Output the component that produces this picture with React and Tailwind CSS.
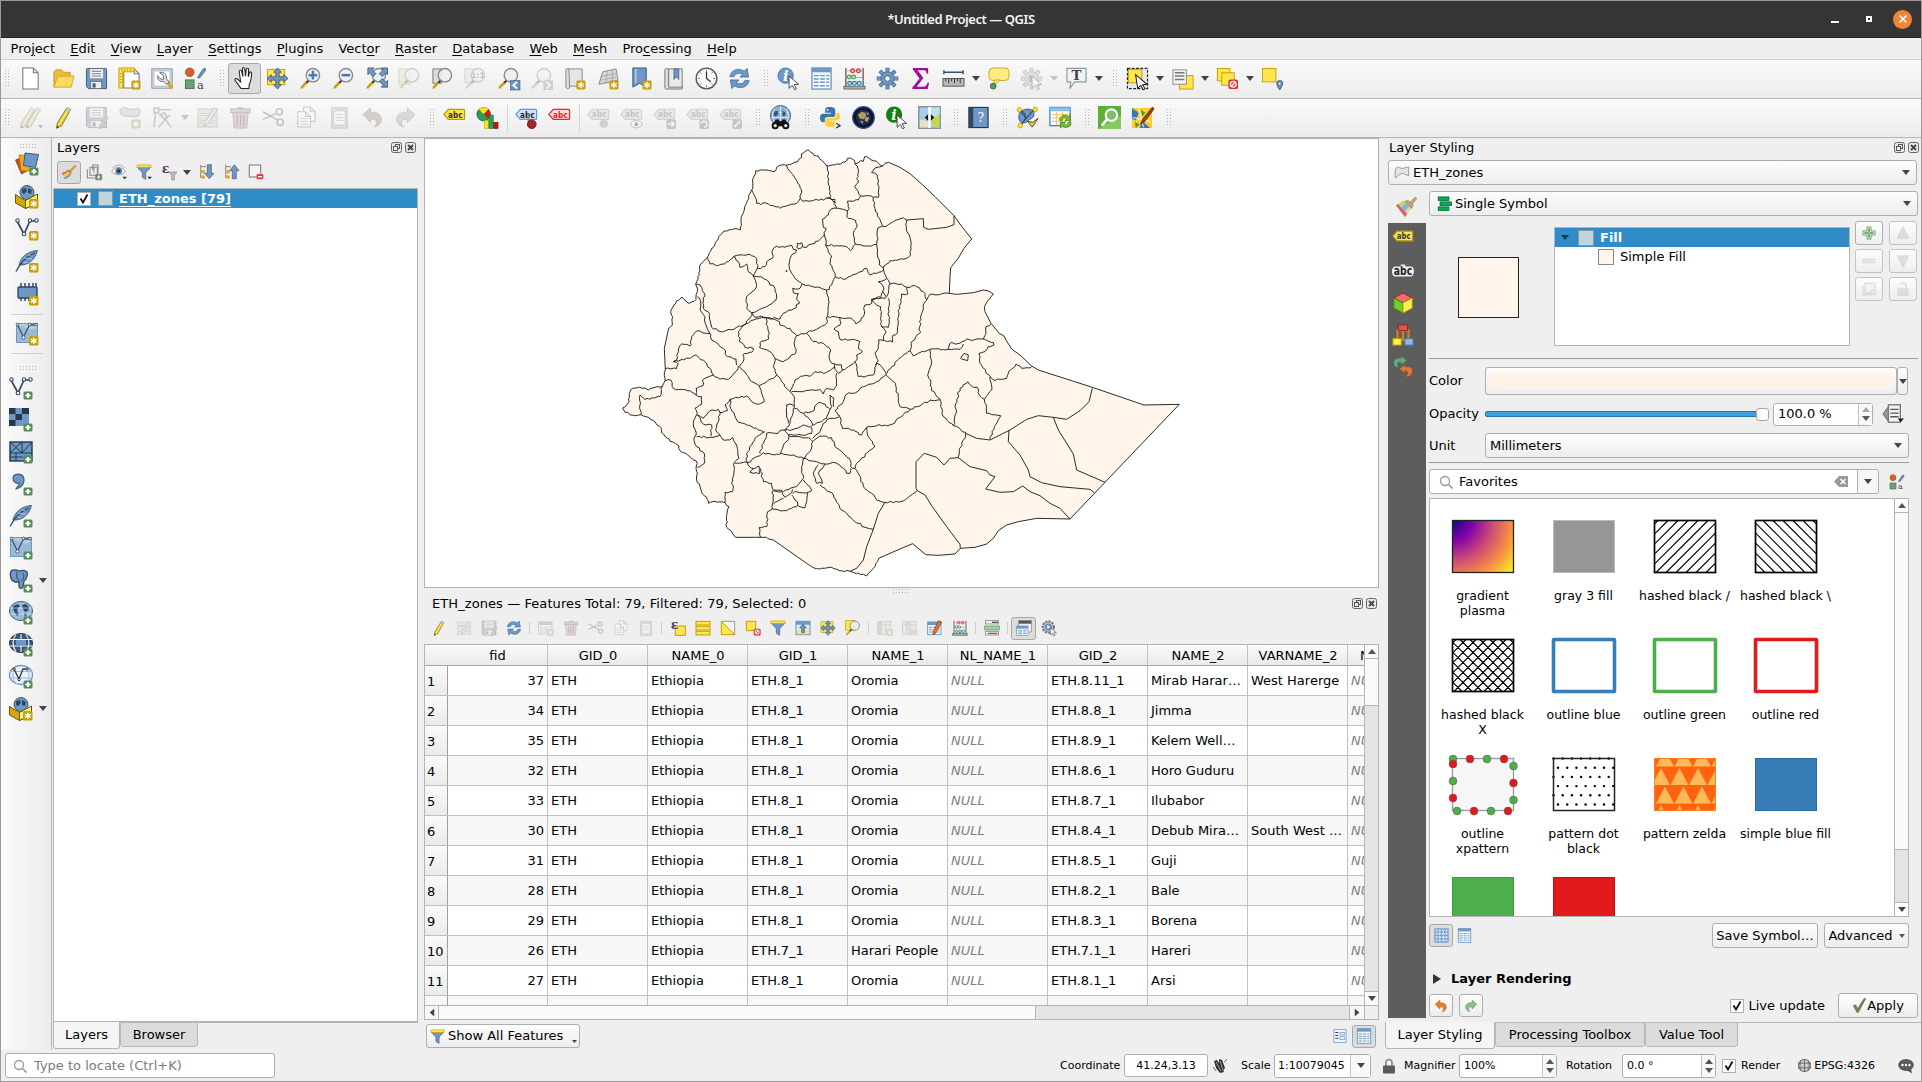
import React from "react";

const B = "#6d97c4";
const D = "#415a75";
const Y = "#ffe64c";
const G = "#c4a000";

/* ---------- badges ---------- */
const Star = () => (
  <g>
    <rect x="14" y="14" width="9.5" height="9.5" rx="1.5" fill="#c4a000" />
    <path d="M18.75 15.5v6.6M15.8 17.2l5.9 3.2M15.8 20.4l5.9-3.2" stroke="#fff" strokeWidth="1.4" />
  </g>
);
const Plus = () => (
  <g>
    <rect x="14.5" y="15.5" width="9" height="8" rx="1.5" fill="#5a8c5a" />
    <path d="M19 17v5M16.5 19.5h5" stroke="#fff" strokeWidth="1.8" />
  </g>
);
const Cursor = () => <path d="M12.500 9.500l10 8.500-4.600.4 2.400 4.400-1.900 1-2.400-4.600-3.300 3z" fill="#fff" stroke="#333" strokeWidth=".9" />;
const Lens = () => (
  <g>
    <path d="M8.500 15.500L2.500 22" stroke="#e8b830" strokeWidth="3.200" />
    <path d="M9.800 13.800L1.500 22.500" stroke="#6b5a2a" strokeWidth=".7" />
    <path d="M10.200 13.800l-2.500 2.700" stroke="#333" strokeWidth="2" />
    <circle cx="14.500" cy="8.500" r="7" fill="#e9eef2" fillOpacity=".85" stroke="#8a8a8a" strokeWidth="1.500" />
  </g>
);
const Tag = ({ f, s, t }) => (
  <g>
    <path d="M5.500 3.500h16a1 1 0 0 1 1 1v8.500a1 1 0 0 1-1 1h-16l-4.500-5.200z" fill={f} stroke={s} strokeWidth="1.300" />
    <text x="12.800" y="12" fontSize="9" fontWeight="bold" textAnchor="middle" fill={t} fontFamily="DejaVu Sans" textLength="15" lengthAdjust="spacingAndGlyphs">abc</text>
  </g>
);
const PencilShape = ({ x = 0 }) => (
  <g transform={`translate(${x} 0)`}>
    <path d="M15.500 2l3.800 1.800-9.500 17-5 2.400.8-5.500z" fill="#e8cf3a" stroke="#7a6a10" strokeWidth=".9" />
    <path d="M17 3.500L7.500 19.500" stroke="#fff6a0" strokeWidth="1" />
    <path d="M5.200 20.600l-.4 2.600 2.400-1.200z" fill="#333" />
    <path d="M15.500 2l3.800 1.800-1 1.900-3.800-1.900z" fill="#ddd" stroke="#888" strokeWidth=".5" />
  </g>
);
const VLine = () => (
  <g stroke="#2c4a68" fill="none" strokeWidth="1.700">
    <path d="M2 4l7 13 6-13h6" />
    <g fill="#fff" strokeWidth="1.100"><circle cx="2.500" cy="3.500" r="1.700" /><circle cx="9" cy="17" r="1.800" /><circle cx="15" cy="3.500" r="1.700" /><circle cx="21.500" cy="3.500" r="1.700" /></g>
  </g>
);
const Feather = () => (
  <g>
    <path d="M22.500 1.500C14 2 6 7 4 16c6 .5 15-2 18.500-14.500z" fill={B} stroke={D} strokeWidth=".9" />
    <path d="M20 4C12 7 6 13 1 22.500" stroke="#2c4a68" strokeWidth="1.300" fill="none" />
    <path d="M9 9l3 .4M13 6l3 .4M8 13l4 .5M12 9.500l5 .5" stroke="#b7d0ea" strokeWidth=".8" />
  </g>
);
const GlobeShape = ({ f = B }) => (
  <g>
    <ellipse cx="12" cy="10" rx="11.500" ry="9.500" fill={f} stroke={D} strokeWidth="1" />
    <path d="M4 5l5-2 2 2-2 2-1 3 2 3-2 2-2-3-2-4zM13 4l4-1 3 3-1 4-3 1-2-3zM15 12l3 1-2 3z" fill="#2c4a68" />
    <path d="M1 7h22M1 13h22" stroke="#d6e5f4" strokeWidth=".7" />
  </g>
);
const GlobeBox = () => (
  <g>
    <circle cx="12" cy="7.500" r="7" fill={B} stroke={D} />
    <path d="M7 4l4-1 1 3-3 3-2-1zM13 3l4 2-1 4-3-1z" fill="#2c4a68" />
    <path d="M.5 9.500l10 6 12-6v8.500L10.500 23.500.5 18z" fill="#d4a80a" stroke="#5c4a00" strokeWidth=".9" />
    <path d="M10.500 15.500l12-6.500v8.500l-12 6z" fill="#fff27a" stroke="#5c4a00" strokeWidth=".9" />
    <Star />
  </g>
);
const MeshV = () => (
  <g>
    <rect x="1.500" y="1.500" width="21" height="19" fill="#b9cbdf" stroke={B} strokeWidth="1" />
    <path d="M2 4C9 2 15 12 22 5v15H2z" fill="#8aaccf" opacity=".6" />
    <path d="M2.500 3l6 12 6-12h6" stroke="#3b5a7a" fill="none" strokeWidth="1.300" />
    <g fill="#fff" stroke="#3b5a7a"><circle cx="2.500" cy="2.500" r="1.300" /><circle cx="8.500" cy="15.500" r="1.700" /><circle cx="14.500" cy="2.500" r="1.300" /><circle cx="21" cy="2.500" r="1.300" /></g>
  </g>
);
const Eps = () => <text x="1" y="14" fontSize="19" fontWeight="bold" fontFamily="DejaVu Serif" fill="#5a3a6a">ε</text>;
const PanCross = () => (
  <g>
    <rect x="1.500" y="2.500" width="18" height="16" fill={Y} stroke={G} />
    <path d="M12 1l4 4.500h-2.300v4.800h4.800V8l4.500 4-4.500 4v-2.300h-4.800v4.800H16L12 23l-4-4.500h2.300v-4.800H5.500V16L1 12l4.500-4v2.300h4.800V5.500H8z" fill={B} stroke={D} strokeWidth=".9" />
  </g>
);
const Refresh = () => (
  <g fill={B} stroke="#3a6aa0" strokeWidth=".8">
    <path d="M2 10C3 3 11 .5 17 4.200L20 1.500l1.500 9h-9l2.800-2.900C11 5.500 7 7 6.500 10z" />
    <path d="M22 14c-1 7-9 9.500-15 5.800L4 22.500l-1.500-9h9l-2.800 2.900c4.300 2.100 8.300.6 8.800-2.400z" />
  </g>
);
const Funnel = () => (
  <g>
    <path d="M2 5h20l-7.500 8v10l-5-3v-7z" fill={B} stroke={D} strokeWidth="1" />
    <rect x="1.500" y="1.500" width="21" height="4" fill={Y} stroke={G} />
  </g>
);
const UndoShape = ({ c, s }) => <path d="M2 9l8-7v4.500c8-.5 12 3.500 11 8.500-.6 3.600-3 6-7 6.800 3-2.500 4-8.800-4-8.300V17z" fill={c} stroke={s} strokeWidth=".9" />;
const TableShape = ({ x = 2, y = 1, w = 20, h = 22 }) => (
  <g>
    <rect x={x} y={y} width={w} height={h} fill="#f4f8fc" stroke={B} strokeWidth="1.400" />
    <rect x={x} y={y} width={w} height="4.500" fill={B} />
    <path d={`M${x + 2} ${y + 8}h${w - 4}M${x + 2} ${y + 11.500}h${w - 4}M${x + 2} ${y + 15}h${w - 4}${h > 20 ? `M${x + 2} ${y + 18.500}h${w - 4}` : ""}`} stroke={B} strokeWidth="1.500" strokeDasharray="5 1.500" />
  </g>
);
const Abacus = () => (
  <g>
    <path d="M3 1v20M21 1v20" stroke="#555" strokeWidth="1.300" />
    <path d="M3 4h18M3 11h18M3 17h18" stroke="#999" strokeWidth=".8" />
    <g fill="#f7b0b0" stroke="#c33" strokeWidth="1.200"><circle cx="10" cy="4" r="2" /><circle cx="16" cy="4" r="2" /></g>
    <g fill="#bfe6c4" stroke="#4a9a5a" strokeWidth="1.200"><circle cx="6.500" cy="10.500" r="2" /><circle cx="11" cy="10.500" r="2" /></g>
    <g fill="#b8e0ee" stroke="#3c7c9c" strokeWidth="1.200"><circle cx="7" cy="17" r="2" /><circle cx="12" cy="17" r="2" /><circle cx="17" cy="17" r="2" /></g>
    <rect x="1" y="20" width="22" height="3" fill="#aaa" stroke="#555" strokeWidth=".8" />
  </g>
);
const StyleMgr = () => (
  <g>
    <circle cx="6" cy="5.500" r="4.500" fill="#d2622c" stroke="#9c451b" strokeWidth=".8" />
    <path d="M14 11l6-9 2.500-.5-.3 2.500-6 7.500z" fill={B} stroke={D} strokeWidth=".8" />
    <rect x="1.500" y="13.500" width="9" height="9" fill="#6aa07a" stroke="#46785a" />
    <text x="13.500" y="22.500" fontSize="12" fontFamily="DejaVu Serif" fill="#444">a</text>
  </g>
);
const Brush = () => (
  <g>
    <path d="M1 13c3-1 5 0 8-3l6 6c-3 4-7 6-9 7z" fill="#f2cf4a" />
    <path d="M1 13c3-1 5 0 8-3l1.800 1.800L3 17z" fill="#e06a5a" />
    <path d="M4.500 20.500l9-6 1.500 1.500c-3 4-7 6-9 7z" fill="#6d97c4" />
    <path d="M9 9.500l2-1.500 5 5-1.500 2z" fill="#a9803a" />
    <path d="M13 10l8-8.500 2 2L14.500 12z" fill="#d9a441" stroke="#8a6a2a" strokeWidth=".6" />
  </g>
);
const BrushWide = () => (
  <g>
    <path d="M1 10c4-1 5-4 9-5l8 8c-3 3-4 7-7 10z" fill="#d8dc9a" />
    <path d="M1 10l2.500-1.200L13 19l-2 4z" fill="#d8606a" />
    <path d="M3.500 8.800C7 7 8 5.500 10 5l2 2-5.500 5.500z" fill="#c8d870" />
    <path d="M6.500 12.500l5-5 4 4-5 5z" fill="#8fb0d6" />
    <path d="M11 6l3-1.500 6 6-2 3z" fill="#b8a888" stroke="#8a7a5a" strokeWidth=".7" />
    <path d="M16 7l6-6 1.800 1.600-5.300 6.900z" fill="#c8a868" stroke="#9a7a4a" strokeWidth=".6" />
  </g>
);
const Gear = ({ f = B }) => (
  <g>
    <path d="M12 .8v22.400M.8 12h22.400M4 4l16 16M20 4L4 20" stroke={D} strokeWidth="4.200" />
    <path d="M12 1.400v21.200M1.400 12h21.200M4.500 4.500l15 15M19.500 4.500l-15 15" stroke={f} strokeWidth="3" />
    <circle cx="12" cy="12" r="7" fill={f} stroke={D} strokeWidth=".6" />
    <circle cx="12" cy="12" r="3" fill="#f4f4f4" stroke={D} strokeWidth="1" />
  </g>
);
const Trash = () => (
  <g>
    <path d="M4 7h16l-1.500 16h-13z" fill="#e0a0a0" stroke="#a05050" />
    <rect x="2" y="3" width="20" height="4" fill="#d09090" stroke="#a05050" />
    <path d="M8.500 9.500v11M12 9.500v11M15.500 9.500v11M9 2h6" stroke="#904040" strokeWidth="1.300" />
  </g>
);
const Scissors = () => (
  <g fill="none" stroke="#666" strokeWidth="1.600">
    <path d="M1 6l16 9M1 14l13-6" /><circle cx="18" cy="6" r="3.200" /><circle cx="19" cy="17" r="3.200" />
  </g>
);
const Disk = () => (
  <g>
    <path d="M1.500 2.500a1 1 0 0 1 1-1h19a1 1 0 0 1 1 1v20h-19l-2-2z" fill={B} stroke="#3d5a78" />
    <rect x="5" y="2" width="14" height="10" fill="#f5f5f5" stroke="#8a8a8a" strokeWidth=".6" />
    <path d="M7 4.500h10M7 7h10M7 9.500h10" stroke="#777" />
    <rect x="6" y="15" width="11.500" height="7.500" fill="#eee" stroke="#555" strokeWidth=".7" /><rect x="8" y="17" width="3" height="4.500" fill="#3d5a78" />
  </g>
);
const Page = ({ x = 4, y = 1, w = 15, h = 21 }) => (
  <path d={`M${x} ${y}h${w - 5}l5 5v${h - 5}h${-w}zM${x + w - 5} ${y}v5h5`} fill="#fff" stroke="#777" strokeWidth="1.100" />
);
const Label = ({ badge }) => <g><Tag f="#d8d4b8" s="#999" t="#666" />{badge}</g>;

const ICONS = {
  new: <Page x={4} y={1} w={16} h={22} />,
  open: <g><path d="M2 21V5l2-2h6l2 2.500h7V9" fill="#e8bd3a" stroke="#c49a20" /><path d="M2 21L6 9.500h17L20 21z" fill="#ffd95a" stroke="#d0a62c" /></g>,
  save: <Disk />,
  layout: <g><Page x={6} y={2} w={16} h={20} /><path d="M1 1h16v4H5v17H1z" fill={Y} stroke={G} /><path d="M4 2v2M7 2v2M10 2v2M13 2v2M2 7h2M2 10h2M2 13h2M2 16h2" stroke={G} /><Star /></g>,
  wrench: <g><rect x="1" y="2" width="21" height="20" fill="#fff" stroke="#777" /><rect x="3" y="4" width="17" height="16" fill="none" stroke="#8ab0d8" /><path d="M16 14l5.500 8" stroke="#d8a81a" strokeWidth="3.500" /><path d="M9 6l4 3v4l-4-1-2-3c-1 4 2 7 6 6l3 3 3-2-3-4c1-4-3-8-7-6z" fill="#ddd" stroke="#555" strokeWidth=".8" /></g>,
  style: <StyleMgr />,
  hand: <path d="M8.500 22.500L2.500 14.500c-1.500-2.200 1-3.200 2.300-1.700L8 15.500 6.500 5c-.2-2 2-2.200 2.500-.4L10.300 10l-.5-8c0-2 2.300-2 2.500 0l.7 7.500.9-7c.4-1.800 2.500-1.400 2.400.3l-.4 7.500 1.300-4.200c.6-1.600 2.500-1.200 2.300.5-.3 4-1 9-2.500 11.400l-.5 4.500z" fill="#fff" stroke="#222" strokeWidth="1.100" />,
  pan: <PanCross />,
  zin: <g><Lens /><path d="M14.500 4v9M10 8.500h9" stroke="#4a78b0" strokeWidth="2.600" /></g>,
  zout: <g><Lens /><path d="M10 8.500h9" stroke="#4a78b0" strokeWidth="2.600" /></g>,
  zfull: <g><Lens /><path d="M3 1h6.500L7.500 3l4 4-3 3-4-4-1.500 2zM23.500 1H17l2 2-4 4 3 3 4-4 1.500 2zM23.500 21H17l2-2-4-4 3-3 4 4 1.500-2z" fill={B} stroke={D} strokeWidth=".9" /></g>,
  zsel: <g><rect x="1" y="2" width="12" height="16" fill="#eee07a" stroke={G} /><Lens /></g>,
  zlay: <g><path d="M2 2h9v15H2z" fill="#ddd" stroke="#777" /><Lens /></g>,
  z11: <g><rect x="1" y="2" width="12" height="14" fill="#ddd" stroke="#999" /><Lens /><text x="14.500" y="12" fontSize="8" textAnchor="middle" fontWeight="bold" fontFamily="DejaVu Sans" fill="#555">1:1</text></g>,
  zlast: <g><Lens /><rect x="14" y="14" width="10" height="10" fill={B} stroke={D} strokeWidth=".6" /><path d="M21 15.500L17 19l4 3.500" stroke="#fff" strokeWidth="1.900" fill="none" /></g>,
  znext: <g><Lens /><rect x="14" y="14" width="10" height="10" fill={B} /><path d="M17 15.500l4 3.500-4 3.500" stroke="#fff" strokeWidth="1.900" fill="none" /></g>,
  nview: <g><path d="M3 3c0-2 4-2 4 0v18c0 2-4 2-4 0z" fill="#ddd" stroke="#888" /><path d="M6 2h14v18H7z" fill="#e6e6e6" stroke="#888" /><Star /></g>,
  n3d: <g><path d="M7 5l14-3 2 12-20 4z" fill="#d8d8d8" stroke="#888" /><path d="M5 10l16-3M4 14l17-3.500M12 4l-2 13M17 3v12" stroke="#999" strokeWidth=".7" /><Star /></g>,
  nbook: <g><path d="M4 1h14v20l-7-4-7 4z" fill={B} stroke={D} /><path d="M7 2v15" stroke="#a9c6e6" strokeWidth="2" /><Star /></g>,
  book: <g><path d="M3 3c0-2 4-2 4 0v16h14v4H5c-2 0-2-1-2-2z" fill="#ddd" stroke="#777" /><path d="M7 2h14v19H7z" fill="#eaeaea" stroke="#777" /><path d="M12.500 2h5v11l-2.500-3-2.500 3z" fill={B} stroke={D} strokeWidth=".8" /></g>,
  clock: <g><circle cx="12" cy="12" r="10.800" fill="#fafafa" stroke="#555" strokeWidth="1.400" /><path d="M12 3v2M12 19v2M3 12h2M19 12h2M5.600 5.600l1.200 1.200M17.200 17.200l1.200 1.200M5.600 18.400l1.200-1.200M17.200 6.800l1.200-1.200" stroke="#666" /><path d="M12 5v7l4.500 3.500" stroke="#333" strokeWidth="1.300" fill="none" /></g>,
  refresh: <Refresh />,
  ident: <g><circle cx="9" cy="9" r="8" fill={B} stroke="#4a78b0" /><text x="9" y="14.500" fontSize="15" fontStyle="italic" fontWeight="bold" textAnchor="middle" fontFamily="DejaVu Serif" fill="#fff">i</text><Cursor /></g>,
  table: <TableShape />,
  abacus: <Abacus />,
  gear: <Gear />,
  sigma: <path d="M4 1h16v6h-1.500C18 4 17 3.500 14 3.500H9l6 8-7 9h6.500c3 0 4-1 4.800-4H21L19.500 23H3.500v-1.500l7.500-9.500L4 2.500z" fill="#a0109c" />,
  ruler: <g><path d="M2 5.500h20M2 3.500v4M22 3.500v4" stroke="#2c5078" strokeWidth="1.500" /><rect x="1" y="12" width="22" height="8" fill="#bbb" stroke="#555" /><path d="M4 12v3M7 12v5M10 12v3M13 12v5M16 12v3M19 12v5" stroke="#333" /></g>,
  tip: <g><rect x="2" y="1" width="21" height="13" rx="4" fill="#ffec80" stroke="#c8aa20" /><path d="M8 13.500l-1 6 6.500-6z" fill="#ffec80" stroke="#c8aa20" /><circle cx="6.500" cy="20" r="3" fill="#5a9a5a" stroke="#3a703a" /></g>,
  run: <g><Gear f="#bbb" /><path d="M10 8l6 4-6 4z" fill="#666" /><Cursor /></g>,
  text: <g><path d="M2 1.500h20v14H10l-5 7 1-7H2z" fill="#eef3f6" stroke="#8a9aa5" strokeWidth="1.200" /><text x="12" y="13.500" fontSize="14" fontWeight="bold" textAnchor="middle" fontFamily="DejaVu Serif" fill="#444">T</text></g>,
  select: <g><rect x="1.500" y="1.500" width="21" height="21" fill="#e6e6e6" stroke="#222" strokeDasharray="3 1.500" strokeWidth="1.200" /><rect x="2.500" y="2.500" width="14" height="14" fill={Y} stroke={G} /><path d="M10 8l12 10-4.600.4 2.400 4.400-1.900 1-2.400-4.600-3.300 3z" fill="#fff" stroke="#222" strokeWidth="1.100" /></g>,
  selval: <g><rect x="9" y="9" width="14" height="14" fill={Y} stroke={G} /><rect x="2" y="3" width="14" height="15" fill="#f5f5f5" stroke="#888" /><path d="M4 6h10M4 9.500h10M4 13h10" stroke="#777" strokeWidth="1.600" /></g>,
  desel: <g><rect x="1.500" y="1.500" width="13" height="13" fill={Y} stroke={G} /><rect x="6" y="6" width="13" height="13" fill={Y} stroke={G} /><rect x="13" y="13" width="10" height="10" rx="2" fill="#d33" /><circle cx="18" cy="18" r="3" fill="none" stroke="#fff" strokeWidth="1.400" /><path d="M16 20l4-4" stroke="#fff" strokeWidth="1.400" /></g>,
  selloc: <g><rect x="1.500" y="1.500" width="14" height="14" fill={Y} stroke={G} /><path d="M19.500 24c-5-7-3-10 0-10s5 3 0 10z" fill="#6b8ca8" stroke="#47657e" /><circle cx="19.500" cy="17.500" r="1" fill="#fff" /></g>,
  pencils: <g><PencilShape x={-3} /><PencilShape x={3} /><path d="M20 20h5l-2.500 3z" fill="#333" /></g>,
  pencil: <PencilShape />,
  saveed: <g><Disk /><path d="M22 11l2 1-6 10-3 1.500.5-3.500z" fill="#c88" stroke="#855" /></g>,
  addf: <g><path d="M2 6c0-5 5-5 9-3s12-3 12 2-3 7-7 6-13 2-14-5z" fill="#b8c8b0" stroke="#778" /><Star /></g>,
  vertex: <g fill="none" stroke="#777" strokeWidth="1.500"><path d="M5 5L3 22M6 4h15M8 22L20 9M12 10l9 12" /><rect x="3" y="2" width="5" height="5" fill="#ddd" /><path d="M9 9l5-2 3 4-3 3z" fill="#ccc" /></g>,
  modattr: <g><rect x="2" y="3" width="20" height="5" fill="#ddd8a0" stroke="#998" /><rect x="2" y="10" width="20" height="5" fill="#ddd8a0" stroke="#998" /><rect x="2" y="17" width="20" height="5" fill="#ddd8a0" stroke="#998" /><path d="M19 2l3 2-10 15-4 2 1-4z" fill="#ddd" stroke="#777" /></g>,
  trash: <Trash />,
  cut: <Scissors />,
  copy: <g><Page x={9} y={1} w={12} h={15} /><Page x={3} y={6} w={13} h={16} /><path d="M5.500 13h8M5.500 16h8M5.500 19h8" stroke="#999" /></g>,
  paste: <g><rect x="4" y="2" width="16" height="21" fill="#ccc" stroke="#777" /><rect x="6" y="5" width="12" height="15" fill="#fff" stroke="#888" /><rect x="8" y="1" width="8" height="4" fill="#aaa" /><path d="M8 9h8M8 12h8M8 15h8" stroke="#999" /></g>,
  undo: <UndoShape c="#c08070" s="#905a4a" />,
  redo: <g transform="translate(24 0) scale(-1 1)"><UndoShape c="#90b090" s="#608060" /></g>,
  abc: <Tag f="#fbe34a" s="#b89a10" t="#333" />,
  abcblue: <g><Tag f="#cfe2f8" s="#5a9ae0" t="#222" /><path d="M14 8v8" stroke="#888" strokeWidth="2" /><circle cx="17.500" cy="19" r="4.500" fill="#a8242a" stroke="#701418" /></g>,
  abcred: <Tag f="#ffdede" s="#f02020" t="#f02020" />,
  diagram: <g><circle cx="8" cy="8.500" r="7" fill="#26a05a" stroke="#111" strokeWidth=".6" /><path d="M8 8.500L3 3.500a7 7 0 0 1 10 0z" fill="#ffe01a" /><path d="M8 8.500l5-5a7 7 0 0 1 0 10z" fill="#d01a1a" /><rect x="9" y="15" width="4" height="8.500" fill="#ffe01a" stroke={G} strokeWidth=".6" /><rect x="13.500" y="9.500" width="4.500" height="14" fill="#26a05a" stroke="#176b3a" strokeWidth=".6" /><rect x="18.500" y="17" width="4.500" height="6.500" fill="#c01818" stroke="#700" strokeWidth=".6" /></g>,
  lab1: <Label badge={<circle cx="17.500" cy="18.500" r="4.500" fill="#b09090" />} />,
  lab2: <Label badge={<g><ellipse cx="17" cy="19" rx="6" ry="3.800" fill="#fff" stroke="#555" /><circle cx="17" cy="19" r="2" fill="#333" /></g>} />,
  lab3: <Label badge={<g><rect x="14" y="14" width="10" height="10" rx="2" fill="#777" /><path d="M15.500 19h6M19 16l3 3-3 3" stroke="#fff" strokeWidth="1.500" fill="none" /></g>} />,
  lab4: <Label badge={<g><rect x="14" y="14" width="10" height="10" rx="2" fill="#777" /><path d="M16 18a3 3 0 1 1 3 4" stroke="#fff" strokeWidth="1.500" fill="none" /></g>} />,
  lab5: <Label badge={<g><rect x="14" y="14" width="10" height="10" rx="2" fill="#777" /><path d="M16 22l6-6" stroke="#fff" strokeWidth="1.800" /></g>} />,
  bino: <g><circle cx="12" cy="10" r="10.500" fill="#8fb0d6" stroke={D} /><path d="M3 7h18M2.500 12h19M12 .5v19M6 2.500c-3 5-3 10 0 15M18 2.500c3 5 3 10 0 15" stroke="#e2edf8" strokeWidth=".9" fill="none" /><path d="M5 6l4-1 1 3-3 3-2-1zM14 5l4 2-2 4-2-1z" fill="#35587d" /><path d="M7 14h3l1 2h2l1-2h3l4 7H3z" fill="#111" /><g fill="#eee" stroke="#111" strokeWidth="2"><circle cx="6.500" cy="20.500" r="2.700" /><circle cx="17.500" cy="20.500" r="2.700" /></g></g>,
  python: <g><path d="M11 1C7 1 6.500 2.500 6.500 5v2h6v1H4C2 8 1 10 1 12.500S2.500 17 4 17h2v-2.500c0-2 1.500-3 3-3h5c2 0 3-1 3-3V5c0-3-2-4-6-4z" fill="#3a74a8" /><path d="M12 22c4 0 4.800-1.500 4.800-4v-2h-6v-1H19c2 0 3-2 3-4.500S20.500 7 19 7h-1v2.500c0 2-1.500 3-3 3H9.500c-2 0-3 1-3 3V18c0 3 2 4 5.500 4z" fill="#ffcf3f" /><circle cx="9" cy="4" r="1" fill="#fff" /><path d="M18 18l4 2.500-4 2.500" fill="none" stroke="#333" strokeWidth="1.400" /></g>,
  dark: <g><circle cx="12" cy="12" r="11.300" fill="#101428" stroke="#35509a" strokeWidth="1.200" /><circle cx="12" cy="12" r="8" fill="#1c2c4c" /><path d="M6 9l4-3 4 1 1 3-3 4-4-1zM14 11l4 1-2 5-3-2z" fill="#b39a55" /><path d="M8 15l4 1-1 3zM15 6l3 2-2 2z" fill="#6f9fca" /></g>,
  ginfo: <g><circle cx="9.500" cy="9" r="8.500" fill="#138013" /><text x="9.500" y="14.500" fontSize="15" fontStyle="italic" fontWeight="bold" textAnchor="middle" fontFamily="DejaVu Serif" fill="#fff">i</text><Cursor /></g>,
  swap: <g><rect x=".8" y=".8" width="22.400" height="22.400" fill="#a9cce8" stroke="#8794a4" strokeWidth="1.600" /><path d="M12 1.500h10.500v21H18l-6-8z" fill="#c6d84a" /><path d="M12 1.500h10.500V8L18 12l-6-4z" fill="#bfe0ee" /><path d="M2 14l8 2 2 6.500H2z" fill="#e8e4c0" /><path d="M12 1v22" stroke="#fff" strokeWidth="2.600" /><path d="M10.500 8.500L7 12l3.500 3.500zM13.500 8.500L17 12l-3.500 3.500z" fill="#111" /></g>,
  help: <g><rect x="2" y="1.500" width="20" height="21" fill={B} stroke="#22364c" strokeWidth="1.200" /><rect x="2" y="1.500" width="4.500" height="21" fill="#2c4a68" /><text x="14.500" y="17" fontSize="13" textAnchor="middle" fontFamily="DejaVu Serif" fill="#fff">?</text></g>,
  geom: <g><path d="M4 7C7 3 14 2 18 5c2 4 0 8-4 9-2 3-6 5-9 3-2-2-3-6-1-10z" fill={B} stroke={D} /><path d="M3 4c8 3 10 8 1 17M20 3c-4 3-8 8-15 17M3 4l8 9" stroke="#2c4a68" fill="none" strokeWidth="1.100" /><g fill={Y} stroke={G}><circle cx="3.500" cy="4" r="2.300" /><circle cx="20" cy="3.500" r="2.300" /><circle cx="4.500" cy="20.500" r="2.300" /></g><path d="M12 16l5 6 6-9-5.500 4z" fill="#ffd01a" stroke="#222" strokeWidth=".8" /></g>,
  tabref: <g><rect x="1" y="1.500" width="21" height="19" fill="#fff" stroke="#3f86c6" strokeWidth="1.400" /><rect x="1" y="1.500" width="21" height="4" fill="#8cc0ec" /><path d="M3 9h17M3 12.500h17M3 16h17M8 6v14M14 6v14" stroke="#f0c040" strokeWidth="1" /><path d="M11 15c0-5 6-7 9-4l2-2 .5 6h-6l2-2c-2-1.500-4-.5-4.500 2zM23 17c0 5-6 7-9 4l-2 2-.5-6h6l-2 2c2 1.500 4 .5 4.500-2z" fill="#7cbf2a" stroke="#3f7a10" strokeWidth=".7" /></g>,
  glens: <g><rect x="0" y="0" width="24" height="24" fill="#5fae3c" /><path d="M0 24L24 10v14z" fill="#86c95e" /><circle cx="14" cy="9.500" r="6" fill="#7fbf60" stroke="#fff" strokeWidth="2.200" /><path d="M9.500 14L4 20.500" stroke="#fff" strokeWidth="3" /></g>,
  paint: <g><rect x="1" y="2" width="21" height="21" fill="#ffcb2e" /><path d="M1 2l7 5-3 8-4-2zM12 16l8 7H9z" fill="#3a78b8" /><path d="M10 4l5 3-3 4zM4 17l5 2-4 4z" fill="#3da03d" /><path d="M8 2l5 20M2 12l18 4" stroke="#fff" strokeWidth="1" /><path d="M22.500 1L12 14l-2 5 4.500-3L24 3z" fill="#9a4a1a" stroke="#3a1a08" strokeWidth=".8" /></g>,
  /* left bar */
  dsm: <g><path d="M.5 8l10-4 5 13-9 5z" fill="#c94f1e" stroke="#7a3010" strokeWidth=".7" /><path d="M4 3l12 1-1 15-9 0z" fill="#f2a81c" stroke="#a06a00" strokeWidth=".7" /><path d="M10 1l13.500 1.500-3 13-12-2z" fill={B} stroke={D} /><Plus /></g>,
  ngpkg: <GlobeBox />,
  nshp: <g><VLine /><Star /></g>,
  nfeather: <g><Feather /><Star /></g>,
  chip: <g><path d="M6 1v18M10 1v18M14 1v18M18 1v18M21 1v5" stroke="#2c4a68" strokeWidth="1.500" /><rect x="3" y="5" width="19" height="11" rx="1" fill={B} stroke="#2c4a68" strokeWidth="1.400" /><Star /></g>,
  nmesh: <g><MeshV /><Star /></g>,
  avec: <g><VLine /><Plus /></g>,
  aras: <g><rect x="0" y="0" width="20" height="18" fill={B} /><path d="M0 0h6.500v6H0zM13 0h7v6h-7zM6.500 6H13v6H6.500zM0 12h6.500v6H0z" fill="#22384f" /><Plus /></g>,
  amesh: <g><rect x="1" y="2" width="22" height="19" fill={B} stroke="#22384f" strokeWidth="1.400" /><path d="M13 2v11M1 13h22M7 13v8M1 2l12 11M13 2L1 13M23 2L13 13M1 17h13" stroke="#22384f" strokeWidth="1" /><Plus /></g>,
  acomma: <g><path d="M4 6c0-5 11-6 11 2 0 5-4 8-8 9 0-1 4-3 3-6-3 1-6-1-6-5z" fill={B} stroke={D} strokeWidth="1.200" /><Plus /></g>,
  afeather: <g><Feather /><Plus /></g>,
  amesh2: <g><MeshV /><Plus /></g>,
  apg: <g><path d="M2 2c3-2 6-1 8 0 3-1 6-1 8 1 1 4-1 8-3 9l-1 6c-1 2-4 2-4-1v-4H6C2 12 0 6 2 2z" fill={B} stroke="#2c4a68" strokeWidth="1.300" /><path d="M8 3c-1 4 0 7 2 9M14 4c2 4 0 7-2 8" stroke="#2c4a68" fill="none" /><Plus /></g>,
  awms: <g><GlobeShape f="#9bbce0" /><Plus /></g>,
  awcs: <g><ellipse cx="12" cy="10" rx="11.500" ry="9.500" fill="#35587d" stroke="#22384f" /><path d="M1 6.500h22M1 13h22M12 1v18M7 1.500c-4 5-4 12 0 17M17 1.500c4 5 4 12 0 17" stroke="#fff" strokeWidth="1.100" fill="none" /><rect x="7" y="7" width="10" height="5.500" fill={B} /><Plus /></g>,
  awfs: <g><ellipse cx="12" cy="10" rx="11.500" ry="9.500" fill="#eaf2fa" stroke={B} strokeWidth="1.300" /><path d="M1 6.500h22M1 13h22M7 1.500c-4 5-4 12 0 17M17 1.500c4 5 4 12 0 17" stroke="#9bbce0" fill="none" /><path d="M5 4l5 10 4-10h4" stroke="#333" strokeWidth="1.300" fill="none" /><circle cx="5" cy="4" r="1.200" fill="#fff" stroke="#333" /><circle cx="10" cy="14.500" r="1.200" fill="#fff" stroke="#333" /><circle cx="18" cy="4" r="1.200" fill="#fff" stroke="#333" /><Plus /></g>,
  /* layers bar */
  brush: <Brush />,
  brushw: <BrushWide />,
  addgrp: <g fill="none" stroke="#888" strokeWidth="1.600"><path d="M2 8v13h11M6 5v12h11V5z" /><path d="M10 9V1.500h8V13" /><path d="M12 4v9" /><Plus /></g>,
  eye: <g><path d="M1 11c5-8 15-8 21 0-6 7-15 7-21 0z" fill="#fff" stroke="#999" strokeWidth="1.400" /><circle cx="11.500" cy="10.500" r="5" fill="#4a78b0" /><circle cx="11.500" cy="10.500" r="2" fill="#123" /><path d="M2 6C8 0 16 0 21 6" stroke="#aaa" fill="none" strokeWidth="1.500" /><path d="M17 19h7l-3.500 4z" fill="#333" /></g>,
  filterd: <g><Funnel /><path d="M17 19h7l-3.500 4z" fill="#333" /></g>,
  filter: <Funnel />,
  epsf: <g><Eps /><path d="M12 12h12l-4 5v7h-4v-7z" fill="#bbb" stroke="#888" /></g>,
  expand: <g><path d="M4 1v20M4 4h8M4 12h6M4 20h6" stroke="#999" strokeWidth="1.800" /><rect x="5" y="9" width="5" height="5" fill="#f0a030" /><rect x="5" y="17" width="5" height="5" fill="#f0a030" /><path d="M14 1h6v13h4l-7 8-7-8h4z" fill={B} stroke={D} /></g>,
  collapse: <g><path d="M4 1v20M4 4h8M4 12h6M4 20h6" stroke="#999" strokeWidth="1.800" /><rect x="5" y="9" width="5" height="5" fill="#f0a030" /><rect x="5" y="17" width="5" height="5" fill="#f0a030" /><path d="M14 22h6V10h4l-7-9-7 9h4z" fill={B} stroke={D} /></g>,
  remove: <g><rect x="2" y="1.500" width="17" height="18" fill="#f4f4f4" stroke="#888" strokeWidth="1.800" /><rect x="13" y="15" width="10" height="8" rx="2" fill="#e8393b" /><path d="M15 19h6" stroke="#fff" strokeWidth="2" /></g>,
  /* attribute table */
  addrow: <g><TableShape x={1} y={3} w={20} h={18} /><Star /></g>,
  epssel: <g><rect x="8" y="9" width="15" height="14" fill={Y} stroke={G} strokeWidth="1.500" /><Eps /></g>,
  selall: <g fill={Y} stroke={G} strokeWidth="1.500"><rect x="1.500" y="2" width="21" height="5.500" /><rect x="1.500" y="9.500" width="21" height="5.500" /><rect x="1.500" y="17" width="21" height="5.500" /></g>,
  invert: <g><path d="M2 2h20v20z" fill="#f4f4f4" stroke="#999" strokeWidth="1.500" /><path d="M2 2l20 20H2z" fill={Y} stroke={G} strokeWidth="1.500" /></g>,
  deselt: <g><rect x="2" y="2" width="14" height="14" fill={Y} stroke={G} strokeWidth="1.500" /><rect x="13" y="13" width="10.500" height="10.500" rx="2" fill="#e04a4a" /><circle cx="18.200" cy="18.200" r="3" fill="none" stroke="#fff" strokeWidth="1.500" /><path d="M16 20l4-4" stroke="#fff" strokeWidth="1.500" /></g>,
  movetop: <g><rect x="1.500" y="2" width="21" height="20" fill="#dbe8f5" stroke={B} strokeWidth="1.600" /><rect x="1.500" y="2" width="21" height="5" fill={B} /><path d="M3 17h18M3 20h18" stroke={Y} strokeWidth="2.400" /><path d="M12 6l5 6h-3v7h-4v-7H7z" fill={B} stroke={D} /></g>,
  zoomsel: <g><rect x="1" y="1" width="14" height="14" fill={Y} stroke={G} /><Lens /></g>,
  field: <g><rect x="1" y="2" width="20" height="20" fill="#ddd" stroke="#888" /><path d="M1 7h20M7 2v20M13 2v20" stroke="#888" /><rect x="2" y="2" width="5" height="20" fill="#c99" /><Star /></g>,
  fieldx: <g><rect x="1" y="2" width="20" height="20" fill="#ddd" stroke="#888" /><path d="M1 7h20M7 2v20M13 2v20" stroke="#888" /><rect x="8" y="2" width="5" height="20" fill="#daa" /><rect x="14" y="14" width="9" height="9" fill="#caa" /></g>,
  calc: <g><TableShape x={1} y={3} w={20} h={19} /><path d="M17 1l5 2-9 17-4 2 0-4z" fill="#e0742a" stroke="#7a3a10" /></g>,
  cond: <g><rect x="2" y="1" width="20" height="5" fill="#eee" stroke="#777" /><path d="M12 3.500h9" stroke="#555" strokeWidth="2" /><rect x="1" y="9" width="22" height="6" fill="#9ad69a" stroke="#5a8c5a" /><rect x="2" y="17.500" width="20" height="5" fill="#eee" stroke="#777" /><path d="M6 20h14" stroke="#d22" strokeWidth="1.700" /></g>,
  dock: <g><rect x="4" y="1" width="19" height="17" fill="#eee" stroke="#888" /><rect x="4" y="1" width="19" height="4.500" fill="#555" /><rect x="1" y="9" width="17" height="14" fill="#fff" stroke="#888" /><rect x="1" y="9" width="17" height="4" fill="#6d97c4" /><path d="M3 16h6M3 20h6M11 16h5M11 20h5" stroke="#8ab0d8" strokeWidth="2.400" /></g>,
  actions: <g><circle cx="11" cy="10.500" r="8.500" fill="#fff" stroke="#777" strokeWidth="3" strokeDasharray="3.400 1.500" /><circle cx="11" cy="10.500" r="7" fill="#dfe8f2" stroke="#777" /><circle cx="11" cy="10.500" r="5" fill={B} stroke="#4a78b0" /><path d="M9.500 7.500l4.500 3-4.500 3z" fill="#fff" /><path d="M14 12l9 7-4 .4 2 3.600-2 1-2-4-3 2.500z" fill="#fff" stroke="#555" /></g>,
  form: <g><rect x="1.500" y="1" width="21" height="22" fill="#eef5fc" stroke="#7aa5d4" strokeWidth="1.500" /><path d="M4 6h5M4 11h5M4 16h5" stroke="#333" strokeWidth="1.600" /><path d="M12 6h8v4h-8zM12 13h8v5h-8z" fill="none" stroke="#7aa5d4" strokeWidth="1.500" /></g>,
  grid: <g><rect x="1.500" y="1.500" width="21" height="21" fill="#cfe0f2" stroke="#5a8cc4" strokeWidth="1.500" /><path d="M6.500 2v20M12 2v20M17.500 2v20M2 6.500h20M2 12h20M2 17.500h20" stroke="#5a8cc4" strokeWidth="1.600" strokeDasharray="2.500 1" /></g>,
  /* styling */
  cube: <g strokeWidth="1"><path d="M12 1l10 5.500-10 5.500L2 6.500z" fill="#f26a6a" stroke="#a01818" /><path d="M2 6.500l10 5.500v11L2 17.500z" fill="#6ed02a" stroke="#3d8010" /><path d="M22 6.500L12 12v11l10-5.500z" fill="#fff04a" stroke="#b8a010" /></g>,
  parts: <g><path d="M12 6v13M6 17V7h4M18 17V7h-4" stroke="#c8801a" strokeWidth="2.600" fill="none" /><rect x="7" y="1" width="10" height="6" fill="#e85050" stroke="#a02020" /><rect x="1" y="16" width="9" height="7" fill="#fff04a" stroke={G} /><rect x="14" y="16" width="9" height="7" fill="#8ab8ea" stroke="#4a78b0" /></g>,
  history: <g><path d="M2 9c-1-6 4-7 8-6.500V0l6 5-6 4.500V7C7 6.500 6 7 6 9.500c0 1.500 1 2.500 2 3-4 0-5.500-1-6-3.500z" fill="#6aa880" stroke="#3d7a55" strokeWidth=".6" /><path d="M22 15c1 6-3 8-8 7.500 2-1 3.500-2 3-4.500-.3-1.500-1-2-3-2v2.500L8 14l6-4.500V12c5-.5 7.500 0 8 3z" fill="#e0753a" stroke="#a84a18" strokeWidth=".6" /></g>,
  abcw: <g><path d="M3 7h6l1-2h4l1 2h6c4 0 4 10 0 11H3c-4-1-4-10 0-11z" fill="#e8eefa" /><text x="12" y="16.500" fontSize="13" fontWeight="bold" textAnchor="middle" fontFamily="DejaVu Sans" textLength="20" lengthAdjust="spacingAndGlyphs" fill="#222">abc</text></g>,
  poly: <path d="M3 5c2-3 5-1 8 0s7-2 11-2c1 4-1 10 0 13-5-1-7-4-11-3-3 1-6 5-9 6C3 15 0 10 3 5z" fill="#e4e4e4" stroke="#999" strokeWidth="1.500" />,
  single: <g fill="#00b050" stroke="#036030" strokeWidth="1.300"><rect x="2" y="1.500" width="17" height="5.500" /><rect x="5" y="9.500" width="18" height="5.500" /><rect x="2" y="17.500" width="17" height="5.500" /></g>,
  plusg: <path fillRule="evenodd" d="M8.500 1.500h7v7h7v7h-7v7h-7v-7h-7v-7h7zM11 4.500V11H4.500v2H11v6.500h2V13h6.500v-2H13V4.500z" fill="#f4fbf4" stroke="#4a8a4a" strokeWidth="1.300" />,
  minusg: <g><rect x="2" y="9" width="20" height="6" fill="#f6e8e8" stroke="#a88" strokeWidth="1.500" /><path d="M5 12h14" stroke="#a88" strokeWidth="1.500" /></g>,
  dup: <g><path d="M2 7v15h14" fill="none" stroke="#888" strokeWidth="1.500" /><rect x="5" y="2" width="17" height="17" fill="#eee" stroke="#888" strokeWidth="1.500" /><rect x="15" y="14" width="8" height="8" fill="#dd9" stroke="#888" /></g>,
  unlock: <g><path d="M8 5c1-5 9-5 9 1v5" fill="none" stroke="#999" strokeWidth="2" /><rect x="3" y="11" width="18" height="12" rx="1" fill="#c8b888" stroke="#998" /></g>,
  up: <path d="M12 1l10 20H2z" fill="#a9b6c2" stroke="#788" />,
  down: <path d="M12 23L22 3H2z" fill="#a9b6c2" stroke="#788" />,
  dd: <g><path d="M1 12l6-8v16z" fill="#999" stroke="#555" /><rect x="7" y="2" width="13" height="19" fill="#f4f4f4" stroke="#777" strokeWidth="1.500" /><path d="M9 7h9M9 11h9M9 15h9" stroke="#555" strokeWidth="1.400" /><path d="M17 17h7l-3.500 4z" fill="#222" /></g>,
  undoo: <UndoShape c="#e0803a" s="#b05a18" />,
  redoo: <g transform="translate(24 0) scale(-1 1)"><UndoShape c="#8fc092" s="#4f8a58" /></g>,
  check: <path d="M2 12l4-1 3 6L19 1h3L10 23H8z" fill="#6a8a50" stroke="#3f5a2c" strokeWidth=".8" />,
};

const Ico = ({ n, s = "size-6", off }) => (
  <svg viewBox="0 0 24 24" className={`${s} block shrink-0 overflow-visible ${off ? "opacity-35 grayscale-[60%]" : ""}`}>{ICONS[n]}</svg>
);
const Tri = ({ c = "text-[#444]" }) => (
  <svg viewBox="0 0 8 5" className={`block h-[5px] w-2 shrink-0 ${c}`}><path d="M0 0h8L4 5z" fill="currentColor" /></svg>
);
const TriUp = ({ c = "text-[#555]" }) => (
  <svg viewBox="0 0 8 5" className={`block h-[5px] w-2 shrink-0 ${c}`}><path d="M0 5h8L4 0z" fill="currentColor" /></svg>
);
const Dots = ({ v }) => (
  <svg viewBox={v ? "0 0 18 4" : "0 0 4 18"} className={`block shrink-0 ${v ? "h-[4px] w-[18px]" : "h-[18px] w-1"}`}>
    {[0, 1, 2, 3, 4, 5].map((i) => v
      ? <g key={i} fill="#b4b4b4"><rect x={i * 3} y="0" width="1" height="1" /><rect x={i * 3} y="3" width="1" height="1" /></g>
      : <g key={i} fill="#b4b4b4"><rect x="0" y={i * 3} width="1" height="1" /><rect x="3" y={i * 3} width="1" height="1" /></g>)}
  </svg>
);

/* "|" and "^" handles, "/" separator, "v" arrow, "." thin gap, "-" prefix disabled, "+" prefix pressed */
const Bar = ({ items }) => (
  <div className="flex h-[39px] items-center border-b border-[#b4b4b4] bg-gradient-to-b from-[#fafafa] to-[#ececec] pb-px">
    {items.map((it, i) => {
      if (it === "|") return <div key={i} className="flex w-4 shrink-0 justify-end pr-1"><Dots /></div>;
      if (it === "^") return <div key={i} className="flex w-[13px] shrink-0 pl-[4px]"><Dots /></div>;
      if (it === ".") return <div key={i} className="w-px shrink-0" />;
      if (it === "/") return <div key={i} className="flex w-[6px] shrink-0 justify-center"><div className="h-7 w-px bg-[#d4d4d4]" /></div>;
      if (it === "v" || it === "-v") return <div key={i} className="flex w-3 shrink-0 justify-center"><Tri c={it === "v" ? "text-[#444]" : "text-[#c4c4c4]"} /></div>;
      const off = it[0] === "-";
      const on = it[0] === "+";
      return (
        <div key={i} className={`flex h-[31px] w-[33px] shrink-0 items-center justify-center ${on ? "rounded-[3px] border border-[#a8a8a8] bg-[#dcdcdc]" : ""}`}>
          <Ico n={off || on ? it.slice(1) : it} off={off} s="size-[23px]" />
        </div>
      );
    })}
  </div>
);

const T1 = ["^", "new", "open", "save", "layout", "wrench", "style", "|", "+hand", "pan", "zin", "zout", "zfull", "-zsel", "zlay", "-z11", "zlast", "-znext", "nview", "n3d", "nbook", "book", "clock", "refresh", "|", "ident", "table", "abacus", "gear", "sigma", "ruler", "v", "tip", "-run", "-v", "text", "v", "|", "select", "v", "selval", "v", "desel", "v", "selloc"];
const T2 = ["^", "-pencils", "pencil", "-saveed", "-addf", "-vertex", "-v", "-modattr", "-trash", "-cut", "-copy", "-paste", "-undo", "-redo", "|", "abc", "diagram", "/", "abcblue", "abcred", "/", "-lab1", "-lab2", "-lab3", "-lab4", "-lab5", ".", "|", "bino", "|", ".", "python", "dark", "ginfo", "swap", "|", "help", "|", "geom", "tabref", "|", "glens", "paint", "|"];

const MENU = [["Pro", "j", "ect"], ["", "E", "dit"], ["", "V", "iew"], ["", "L", "ayer"], ["", "S", "ettings"], ["", "P", "lugins"], ["Vect", "o", "r"], ["", "R", "aster"], ["", "D", "atabase"], ["", "W", "eb"], ["", "M", "esh"], ["Pro", "c", "essing"], ["", "H", "elp"]];

/* ---------- map ---------- */
const OUT = "592,30 603,38 612,46 625,48 637,62 648,76 680,72 705,66 712,55 725,56 734,62 735,72 745,68 752,62 760,64 764,50 770,50 790,62 818,78 825,70 836,67 870,82 900,101 935,132 975,170 1032,227 1052,255 1085,297 1062,325 1044,356 1022,383 1020,410 1018,460 1040,463 1090,458 1120,450 1136,453 1150,462 1132,484 1123,500 1125,515 1143,550 1168,580 1182,588 1188,600 1205,627 1230,645 1265,678 1285,690 1450,743 1602,795 1708,793 1380,1137 1280,1135 1225,1145 1190,1155 1165,1172 1150,1195 1130,1212 1095,1222 1051,1225 1035,1242 985,1246 947,1244 908,1211 870,1227 808,1254 803,1265 790,1285 775,1300 770,1308 760,1303 730,1297 720,1294 690,1293 657,1282 635,1285 612,1284 590,1270 490,1200 470,1192 378,1192 350,1162 352,1110 357,1100 345,1088 312,1084 296,1090 292,1078 277,1062 270,1040 262,1028 258,985 262,970 237,948 210,932 207,918 180,904 172,895 155,878 152,862 130,842 100,828 92,824 70,826 45,817 38,804 57,785 60,755 68,745 85,742 105,744 115,750 135,742 157,738 165,722 166,690 163,625 176,565 187,555 183,510 200,483 216,471 228,482 238,490 258,478 262,455 257,433 268,405 270,375 292,352 318,305 342,273 375,266 391,270 393,240 404,200 425,150 427,120 437,92 475,91 492,95 500,82 515,75 527,76 545,72 562,66 575,52 574,42 585,35";
const INNER = [
  "527,76 545,100 562,125 575,150 571,175 578,184 610,181 640,180 650,174 665,180 678,188",
  "571,175 560,190 535,196 510,205 490,197 465,188 452,195 440,190 436,172 425,150",
  "648,76 655,95 654,125 661,155 660,175 670,180",
  "650,174 675,178 672,190 680,205 712,213 718,205 712,184 745,180 752,168 775,167 790,172 805,172 807,140 802,105 785,98 795,84 818,78",
  "735,72 746,95 740,115 745,128 734,140 745,155 752,168",
  "680,205 662,208 655,225 637,238 640,262 648,265 643,285 648,300 647,315",
  "712,213 710,230 738,242 740,262 730,278 736,312",
  "647,315 680,317 710,320 722,332 736,312 775,318 800,313",
  "790,172 795,205 808,235 818,258 802,270 804,295 800,313 802,345 808,375 820,385",
  "818,260 850,245 880,233 891,240 889,260 901,297 902,345 890,355 840,362 822,378 820,385",
  "!891,240 940,236 941,262 955,268 1010,262 1032,254 1032,227",
  "643,285 625,303 605,312 590,322 578,318 575,308 562,310 560,322 567,327 578,318",
  "560,330 550,328 545,316 525,322 500,318 488,330 487,355 470,365 465,380 442,385 440,355 420,343 370,350 355,365 320,377 300,372 292,352",
  "370,350 385,365 390,382 410,372 415,395 430,408 442,385",
  "430,408 440,440 435,448 410,470 408,485 410,505 425,518",
  "430,408 445,410 470,420 495,445 498,480 470,500 425,518",
  "560,330 540,355 538,380 545,400 560,420 577,432 600,438 630,443 650,450",
  "647,315 655,335 665,348 660,372 675,400 676,410 665,435 650,450",
  "676,410 700,418 735,403 770,385 780,405 800,400 820,390",
  "577,432 570,445 548,445 550,458 565,460 560,478 568,490 545,510 520,520 510,537 470,533 450,528 435,532 425,518",
  "650,450 655,480 652,530 650,550 615,570 560,587 540,565 510,555 508,545 470,533",
  "652,530 690,533 725,535 738,552 760,530 765,495 785,490 785,478 810,470",
  "690,533 690,555 672,567 685,575 690,598 730,598 750,605 745,625 757,635 740,645 740,660",
  "590,580 610,605 640,610 662,630 658,655 665,670 675,672",
  "560,587 555,600 557,640 520,665 495,655 480,635 448,622 450,608 476,597 473,560 468,533",
  "425,518 422,530 400,555 340,575 305,562 298,520 280,505 283,460 270,435 257,433",
  "262,470 272,485 270,510 285,530 288,555 300,580",
  "190,665 200,660 205,630 215,612 240,618 245,590 260,573 290,580 300,580 305,600 340,625 352,650 378,657 380,675",
  "190,665 205,672 200,686 166,686",
  "190,665 240,655 255,645 285,665 300,685 310,705 330,718 355,718 378,695 385,678",
  "400,557 385,575 388,605 405,622 430,625 425,637 398,645 400,665 388,680",
  "400,557 430,540 468,533",
  "388,680 410,705 425,725 448,737 490,715 500,705 490,680 495,655",
  "448,737 455,760 463,785 445,793 425,785 410,768 360,778 362,805 380,840 410,855 460,875",
  "310,705 280,718 278,738 258,745 258,765 240,752 190,745 182,720 165,722",
  "258,765 275,770 273,795 255,805 262,820 250,850 258,885 252,895 260,920 283,940 283,970 262,982",
  "92,824 90,765 105,778 150,770 157,738",
  "360,778 345,795 352,812 330,818 325,808 300,812 280,835 262,825",
  "262,825 280,852 305,855 303,888",
  "330,815 325,845 317,870 330,885",
  "260,890 300,892 330,885 340,900 360,900 368,892 380,915 387,955 372,968 368,1020 367,1055 345,1057 345,1087",
  "375,970 412,968 440,950 460,938 485,943 515,940 550,945 580,954",
  "412,968 410,940 425,915 440,890 465,875",
  "450,940 470,880 497,880 525,870 537,888 570,890 600,895 608,905 600,935 580,955",
  "512,940 518,925 537,888",
  "500,705 515,725 540,755 553,770 553,800 540,850 525,870",
  "553,800 540,792 530,795 530,825 535,850",
  "540,755 555,720 580,708 605,705 615,695 640,700 675,682",
  "545,755 570,755 630,748 640,762 650,745 670,750 680,735 680,700",
  "675,672 695,675 697,690 685,700 675,688 675,672",
  "697,690 715,680 735,665 745,710 770,708 790,705 800,670 815,680 827,700",
  "740,660 735,665",
  "553,805 580,820 605,845 608,855 635,845 650,835 665,800 660,765 672,775 670,800",
  "580,820 605,815 625,788 645,792 660,808",
  "525,870 545,870 580,855 600,862 608,855",
  "535,885 575,885 605,880 605,862",
  "608,895 630,875 640,850 660,835 690,830 697,865 730,870 755,885 770,862",
  "690,828 675,812 700,785 710,762 730,760 760,740 800,725 827,705",
  "827,705 857,730 865,780 870,800 900,808",
  "900,808 875,830 840,855 800,857 770,862",
  "827,705 845,680 875,650 900,632 910,648 925,640 960,628 1015,628 1050,628 1060,612",
  "608,905 630,888 665,893 675,920 700,940 718,955 722,980 728,985",
  "770,862 775,890 795,918 745,965 735,985 728,985",
  "580,955 620,965 645,972 675,968 700,985 710,1000 720,1000 722,985",
  "735,985 745,1000 760,1040 785,1060 800,1080 825,1087 880,1083 908,1062 922,1052",
  "580,955 575,980 580,1015 560,1040 520,1055 490,1050 485,1030 460,1025 452,985",
  "412,968 425,985 447,978 450,1000 430,1000 420,997 432,985",
  "487,1052 490,1080 487,1107 473,1115 470,1160 447,1163 452,1192",
  "490,1052 515,1055 525,1072 545,1058 548,1048",
  "490,1092 520,1075",
  "545,1065 562,1085 560,1100 530,1112 487,1107",
  "580,1020 600,1040 605,1052 590,1058 560,1055 548,1060",
  "592,1058 585,1103 562,1095",
  "625,975 610,1000 620,1030 637,1030 625,1000 645,972",
  "630,1035 670,1065 690,1105 730,1140 765,1162 790,1168",
  "!825,1087 805,1120 790,1168 770,1220 760,1260 740,1285 720,1294",
  "!922,1052 945,1065 967,1100 1010,1160 1050,1213 1051,1225",
  "!922,1052 918,1045 918,965 943,940 980,952 1002,975 1020,955 1045,953",
  "1045,953 1055,910 1067,885 1067,877 1030,857 1000,830 992,800 992,782 965,752 962,720 953,705 965,665 960,628",
  "900,808 930,798 960,780 990,780",
  "1030,857 1038,820 1035,800 1050,745 1073,725 1085,738 1102,742 1108,765 1123,778 1130,820 1172,827 1140,897",
  "!1067,880 1100,895 1140,900 1180,880 1200,870 1250,838 1285,827 1330,832 1370,838 1410,812 1437,785 1447,745",
  "!1330,832 1345,870 1390,942 1400,990 1485,1027",
  "!1197,870 1195,905 1230,945 1255,990 1260,1010 1295,1028 1350,1040 1440,1048 1453,1058",
  "!1045,953 1080,980 1130,992 1140,1005 1155,1010 1127,1047 1170,1057 1210,1055 1238,1038 1260,1055 1290,1067 1320,1090 1350,1105 1380,1137",
  "1123,778 1145,750 1140,710 1155,722 1190,715 1195,700 1218,672 1235,685 1265,680",
  "1142,710 1120,685 1108,660 1107,640 1152,615 1150,608 1120,597 1128,575 1128,560 1143,552",
  "1120,597 1085,602 1070,597 1050,610 1020,610 1015,628",
  "!1052,655 1062,640 1075,645 1073,662 1055,657 1052,655",
  "900,632 903,610 932,575 927,570 935,520 942,490 950,480 960,463 1018,460",
  "950,480 940,455 920,440 905,438 890,442 875,432 840,432",
  "820,385 822,395 830,415 840,432 835,460 825,475 812,475 818,455 828,470",
  "890,442 893,462 875,462 872,480 868,500 865,545 862,580 850,585 848,606 805,600 805,625 795,640 805,660 797,675",
  "830,415 805,425 820,440 818,455",
  "812,475 785,478 800,495 812,500 815,560 835,562 837,515 835,475",
  "815,560 828,575 820,600",
];

const rough = (str, close) => {
  const flat = str[0] === "!";
  const pts = (flat ? str.slice(1) : str).split(" ").map((p) => p.split(",").map(Number));
  let d = `M${pts[0][0]} ${pts[0][1]}`;
  let seed = pts[0][0] * 7 + pts[0][1];
  const rnd = () => { seed = (seed * 1103 + 12345) % 65536; return seed / 65536 - 0.5; };
  for (let i = 1; i < pts.length; i++) {
    const [ax, ay] = pts[i - 1];
    const [bx, by] = pts[i];
    const len = Math.hypot(bx - ax, by - ay);
    const n = flat || (close && (ax > 830 || len > 60)) ? 1 : Math.max(1, Math.round(len / 8));
    for (let k = 1; k < n; k++) {
      const t = k / n;
      d += `L${(ax + (bx - ax) * t + rnd() * 6).toFixed(1)} ${(ay + (by - ay) * t + rnd() * 6).toFixed(1)}`;
    }
    d += `L${bx} ${by}`;
  }
  return close ? `${d}Z` : d;
};

const MapView = () => (
  <svg viewBox="0 0 953 448" className="block h-[448px] w-[953px]">
    <g transform="translate(185 1) scale(.33333)" stroke="#232323" strokeWidth="2.900" strokeLinejoin="round" fill="none">
      <path d={rough(OUT, true)} fill="#fff5eb" />
      {INNER.map((s, i) => <path key={i} d={rough(s)} />)}
    </g>
    <circle cx="361.500" cy="132" r=".9" fill="#333" />
  </svg>
);

/* ---------- docks ---------- */
const DockBtns = () => (
  <div className="flex gap-[3px]">
    <svg viewBox="0 0 11 11" className="size-[11px]"><rect x=".5" y=".5" width="10" height="10" rx="2" fill="#e8e8e8" stroke="#666" /><rect x="4.500" y="2.500" width="4" height="4" fill="none" stroke="#555" /><rect x="2.500" y="4.500" width="4" height="4" fill="#eee" stroke="#555" /></svg>
    <svg viewBox="0 0 11 11" className="size-[11px]"><rect x=".5" y=".5" width="10" height="10" rx="2" fill="#e8e8e8" stroke="#666" /><path d="M3 3l5 5M8 3L3 8" stroke="#444" strokeWidth="1.800" /></svg>
  </div>
);
const Check = () => (
  <svg viewBox="0 0 14 14" className="size-[14px] shrink-0"><rect x=".5" y=".5" width="13" height="13" fill="#fff" stroke="#b0b0b0" /><path d="M3.500 6.500l2.500 4 4.500-8" fill="none" stroke="#111" strokeWidth="1.800" /></svg>
);

const btn = "border border-[#aeaeae] rounded-[3px] bg-gradient-to-b from-[#fdfdfd] to-[#ededed]";

const LEFT1 = ["dsm", "ngpkg", "nshp", "nfeather", "chip"];
const LEFT2 = ["avec", "aras", "amesh", "acomma", "afeather", "amesh2", "apg", "awms", "awcs", "awfs", "ngpkg"];

const LeftBar = () => (
  <div className="flex w-[51px] shrink-0 flex-col border-r border-[#b4b4b4] bg-gradient-to-r from-[#fafafa] to-[#ececec]">
    <div className="flex h-[10px] items-end pl-[19px]"><Dots v /></div>
    {LEFT1.map((n) => <div key={n} className="flex h-[32.4px] items-center pl-[14px]"><Ico n={n} /></div>)}
    <div className="ml-[10px] mt-[4px] h-px w-8 bg-[#d0d0d0]" />
    <div className="flex h-[38px] items-center pl-[14px]"><Ico n="nmesh" /></div>
    <div className="ml-[10px] h-px w-8 bg-[#d0d0d0]" />
    <div className="flex h-[16px] items-end pl-[19px]"><Dots v /></div>
    <div className="mt-[2px]">
      {LEFT2.map((n, i) => (
        <div key={i} className="flex h-[32.1px] items-center gap-[6px] pl-2">
          <Ico n={n} />{(i === 6 || i === 10) && <Tri />}
        </div>
      ))}
    </div>
  </div>
);

const Tab = ({ on, w, children }) => (
  <div className={`${w} flex shrink-0 items-center justify-center border-x border-b ${on ? "h-[27px] rounded-b-[3px] border-[#b4b4b4] bg-[#f5f5f5]" : "h-[25px] rounded-b-[3px] border-[#b8b8b8] border-t bg-[#dcdcdc]"}`}>{children}</div>
);

const LayersDock = () => (
  <div className="flex w-[372px] shrink-0 flex-col">
    <div className="flex h-[19px] items-center justify-between pl-[5px] pr-[8px]"><span>Layers</span><DockBtns /></div>
    <div className="flex h-[31px] items-center pb-px pl-[5px]">
      <div className="flex h-[23px] w-6 items-center justify-center rounded-[3px] border border-[#a8a8a8] bg-[#dcdcdc]"><Ico n="brush" s="size-4" /></div>
      {["addgrp", "eye", "filterd"].map((n) => <div key={n} className="flex w-[25.300px] justify-center"><Ico n={n} s="size-4" /></div>)}
      <div className="flex w-[24px] justify-center"><Ico n="epsf" s="size-4" /></div>
      <div className="mr-px flex w-3 justify-center"><Tri /></div>
      {["expand", "collapse", "remove"].map((n) => <div key={n} className="flex w-[24.700px] justify-center"><Ico n={n} s="size-4" /></div>)}
    </div>
    <div className="ml-px h-[834px] w-[365px] border border-[#b4b4b4] bg-white">
      <div className="flex h-[19px] items-center bg-[#308cc6] pl-[23px]">
        <Check />
        <div className="ml-[7px] size-[15px] border border-[#8a9aa0] bg-[#c0d4de]" />
        <span className="ml-[6px] border-b border-white font-bold leading-[15px] text-white">ETH_zones [79]</span>
      </div>
    </div>
    <div className="ml-px flex w-[365px] items-start">
      <Tab on w="w-[67px]">Layers</Tab><Tab w="w-[78px]">Browser</Tab>
      <div className="h-px flex-1 bg-[#b4b4b4]" />
    </div>
  </div>
);

const COLS = ["fid", "GID_0", "NAME_0", "GID_1", "NAME_1", "NL_NAME_1", "GID_2", "NAME_2", "VARNAME_2"];
const ROWS = [
  ["37", "8_1", "Oromia", "8.11_1", "Mirab Harar…", "West Harerge"],
  ["34", "8_1", "Oromia", "8.8_1", "Jimma", ""],
  ["35", "8_1", "Oromia", "8.9_1", "Kelem Well…", ""],
  ["32", "8_1", "Oromia", "8.6_1", "Horo Guduru", ""],
  ["33", "8_1", "Oromia", "8.7_1", "Ilubabor", ""],
  ["30", "8_1", "Oromia", "8.4_1", "Debub Mira…", "South West …"],
  ["31", "8_1", "Oromia", "8.5_1", "Guji", ""],
  ["28", "8_1", "Oromia", "8.2_1", "Bale", ""],
  ["29", "8_1", "Oromia", "8.3_1", "Borena", ""],
  ["26", "7_1", "Harari People", "7.1_1", "Hareri", ""],
  ["27", "8_1", "Oromia", "8.1_1", "Arsi", ""],
];
const TT = ["pencil", "-modattr", "-saveed", "refresh", "/", "-addrow", "-trash", "-cut", "-copy", "-paste", "/", "epssel", "selall", "invert", "deselt", "filter", "movetop", "pan", "zoomsel", "/", "-field", "-fieldx", "calc", "abacus", "/", "cond", "/", "+dock", "actions"];

const Cell = ({ children, c = "" }) => <div className={`w-[100px] shrink-0 overflow-hidden whitespace-nowrap border-r border-[#c0c0c0] px-[3px] leading-[29px] ${c}`}>{children}</div>;

const AttrTable = () => (
  <div className="flex h-[376px] w-[955px] border border-[#b4b4b4] bg-white">
    <div className="flex w-[939px] flex-col">
      <div className="h-[360px] overflow-hidden">
        <div className="flex h-[21px] border-b border-[#a8a8a8] bg-gradient-to-b from-[#fbfbfb] to-[#eaeaea] leading-[21px]">
          <div className="w-[23px] shrink-0" />
          {COLS.map((c, i) => <div key={c} className={`w-[100px] shrink-0 border-r border-[#c0c0c0] text-center ${i === 0 ? "" : "pl-px"}`}>{c}</div>)}
          <div className="shrink-0 pl-3">NL_NAME_2</div>
        </div>
        {[...ROWS, null].map((r, i) => (
          <div key={i} className={`flex h-[30px] border-b border-[#c0c0c0] ${i % 2 ? "bg-[#f7f7f7]" : "bg-white"}`}>
            <div className="w-[23px] shrink-0 border-r border-[#a0a0a0] bg-gradient-to-b from-[#fafafa] to-[#ebebeb] pl-[2px] leading-[31px]">{r ? i + 1 : ""}</div>
            {r ? (
              <>
                <Cell c="text-right">{r[0]}</Cell><Cell>ETH</Cell><Cell>Ethiopia</Cell><Cell>ETH.{r[1]}</Cell><Cell>{r[2]}</Cell>
                <Cell c="italic text-[#808080]">NULL</Cell><Cell>ETH.{r[3]}</Cell><Cell>{r[4]}</Cell><Cell>{r[5]}</Cell>
                <Cell c="italic text-[#808080]">NULL</Cell>
              </>
            ) : COLS.map((c) => <Cell key={c} />)}
          </div>
        ))}
      </div>
      <div className="flex h-[14px] border-t border-[#b4b4b4] bg-[#e4e4e4]">
        <div className="flex w-[14px] items-center justify-center border-r border-[#b4b4b4] bg-[#f6f6f6]"><div className="rotate-90"><Tri /></div></div>
        <div className="w-[597px] border-r border-[#b4b4b4] bg-[#fafafa]" />
        <div className="ml-auto flex w-[15px] items-center justify-center border-l border-[#b4b4b4] bg-[#f6f6f6]"><div className="-rotate-90"><Tri /></div></div>
      </div>
    </div>
    <div className="flex w-[14px] flex-col border-l border-[#b4b4b4]">
      <div className="flex h-[14px] items-center justify-center border-b border-[#b4b4b4] bg-[#fafafa]"><TriUp /></div>
      <div className="h-[47px] border-b border-[#b4b4b4] bg-[#fafafa]" />
      <div className="flex-1 bg-[#e4e4e4]" />
      <div className="flex h-[14px] items-center justify-center border-t border-[#b4b4b4] bg-[#fafafa]"><Tri /></div>
      <div className="h-[14px] border-t border-[#b4b4b4] bg-[#efefef]" />
    </div>
  </div>
);

const Center = () => (
  <div className="flex w-[956px] shrink-0 flex-col">
    <div className="h-[450px] w-[955px] border border-[#b0b0b0] bg-white"><MapView /></div>
    <div className="flex h-[5px] items-center justify-center"><Dots v /></div>
    <div className="flex h-[21px] items-center justify-between pl-2 pr-[3px]"><span className="tracking-[0.08px]">ETH_zones — Features Total: 79, Filtered: 79, Selected: 0</span><DockBtns /></div>
    <div className="flex h-[30px] items-center pb-[2px] pl-[2px]">
      {TT.map((it, i) => {
        if (it === "/") return <div key={i} className="flex w-[7px] justify-center"><div className="h-3 w-px bg-[#cfcfcf]" /></div>;
        const off = it[0] === "-";
        const on = it[0] === "+";
        return <div key={i} className={`flex h-[23px] w-[25px] items-center justify-center ${on ? "rounded-[3px] border border-[#a8a8a8] bg-[#dcdcdc]" : ""}`}><Ico n={off || on ? it.slice(1) : it} off={off} s="size-4" /></div>;
      })}
    </div>
    <AttrTable />
    <div className="flex items-center justify-between pl-[2px] pr-[4px] pt-[4px]">
      <div className={`${btn} flex h-[24px] w-[154px] items-center gap-[3px] pl-[3px]`}><Ico n="filter" s="size-[15px]" /><span>Show All Features</span><div className="ml-auto self-end pb-1 pr-[2px]"><svg viewBox="0 0 5 3" className="block h-[3px] w-[5px]"><path d="M0 0h5L2.500 3z" fill="#444" /></svg></div></div>
      <div className="flex items-center gap-[5px]"><Ico n="form" s="size-[14px]" /><div className="flex h-[23px] w-6 items-center justify-center rounded-[3px] border border-[#a8a8a8] bg-[#dcdcdc]"><Ico n="table" s="size-4" /></div></div>
    </div>
  </div>
);

/* ---------- styling dock ---------- */
const Sw = ({ children }) => <svg viewBox="0 0 66 58" className="block h-[58px] w-[66px] overflow-visible">{children}</svg>;
const box = { x: 2.500, y: 2.500, width: 61, height: 52 };
const hatch = (dir) => {
  let d = "";
  for (let i = -60; i < 130; i += 10) d += dir > 0 ? `M${i + 4} 54.500l52-52` : `M${i} 2.500l52 52`;
  return d;
};
const zelda = () => {
  let d = "";
  for (let r = 0; r < 4; r++) for (let i = -1; i < 4; i++) {
    const x = i * 18.500 + (r % 2 ? 1 : 5) - 1;
    const y = -6.500 + r * 18.500;
    d += `M${x} ${y + 17}l9-17 9 17z`;
  }
  return d;
};
const dotsP = () => {
  const o = [];
  for (let r = 0; r < 6; r++) for (let i = 0; i < 7; i++) o.push([(r % 2 ? 7 : 2.500) + i * 9.200, 2.500 + r * 9.200]);
  return o.filter(([x]) => x < 63);
};
const XP = [[3, 3, 0], [20, 3, 1], [37, 3, 0], [54, 3, 1], [63.500, 10, 0], [63.500, 27, 1], [63.500, 44, 0], [58, 55, 1], [41, 55, 0], [24, 55, 1], [7, 55, 0], [3, 8, 1], [3, 25, 0], [3, 42, 1]];
const SYMS = [
  [<Sw key="s"><defs><radialGradient id="pl" gradientUnits="userSpaceOnUse" cx="2" cy="2" r="80"><stop offset="0" stopColor="#0d0887" /><stop offset=".25" stopColor="#7e03a8" /><stop offset=".5" stopColor="#cc4778" /><stop offset=".76" stopColor="#f89441" /><stop offset="1" stopColor="#f0f921" /></radialGradient></defs><rect {...box} fill="url(#pl)" stroke="#222" strokeWidth="1.300" /></Sw>, ["gradient", "plasma"]],
  [<Sw key="s"><rect {...box} fill="#969696" stroke="#bbb" /></Sw>, ["gray 3 fill"]],
  [<Sw key="s"><defs><clipPath id="bx"><rect {...box} /></clipPath></defs><path d={hatch(1)} clipPath="url(#bx)" stroke="#000" strokeWidth="1.100" /><rect {...box} fill="none" stroke="#000" strokeWidth="1.700" /></Sw>, ["hashed black /"]],
  [<Sw key="s"><path d={hatch(-1)} clipPath="url(#bx)" stroke="#000" strokeWidth="1.100" /><rect {...box} fill="none" stroke="#000" strokeWidth="1.700" /></Sw>, ["hashed black \\"]],
  [<Sw key="s"><path d={hatch(1) + hatch(-1)} clipPath="url(#bx)" stroke="#000" strokeWidth="1.200" /><rect {...box} fill="none" stroke="#000" strokeWidth="1.700" /></Sw>, ["hashed black", "X"]],
  [<Sw key="s"><rect {...box} rx=".5" fill="#fff" stroke="#377eb8" strokeWidth="3.600" /></Sw>, ["outline blue"]],
  [<Sw key="s"><rect {...box} rx=".5" fill="#fff" stroke="#4daf4a" strokeWidth="3.600" /></Sw>, ["outline green"]],
  [<Sw key="s"><rect {...box} rx=".5" fill="#fff" stroke="#e31a1c" strokeWidth="3.600" /></Sw>, ["outline red"]],
  [<Sw key="s"><rect {...box} fill="#f6f6f6" stroke="#999" strokeWidth="1.300" />{XP.map(([x, y, c], i) => <circle key={i} cx={x} cy={y} r="3.900" fill={c ? "#e31a1c" : "#4daf4a"} stroke="#555" strokeWidth=".5" />)}</Sw>, ["outline", "xpattern"]],
  [<Sw key="s">{dotsP().map(([x, y], i) => <circle key={i} cx={x} cy={y} r="1.200" />)}<rect {...box} fill="none" stroke="#222" strokeWidth="1.500" /></Sw>, ["pattern dot", "black"]],
  [<Sw key="s"><rect {...box} fill="#ff6310" /><path d={zelda()} clipPath="url(#bx)" fill="#fdb95a" /><rect {...box} fill="none" stroke="#ff7f1f" /></Sw>, ["pattern zelda"]],
  [<Sw key="s"><rect {...box} fill="#377eb8" stroke="#2c6a9e" /></Sw>, ["simple blue fill"]],
  [<Sw key="s"><rect {...box} fill="#4daf4a" stroke="#3f9a3c" /></Sw>, []],
  [<Sw key="s"><rect {...box} fill="#e31a1c" stroke="#b81315" /></Sw>, []],
];

const SBtn = ({ n, off }) => <div className={`${btn} flex h-6 w-[28px] items-center justify-center ${off ? "border-[#c4c4c4]" : ""}`}><Ico n={n} off={off} s="size-[14px]" /></div>;
const Spin = ({ w, h = "h-[23px]", children, g }) => (
  <div className={`${w} ${h} flex shrink-0 rounded-[3px] border border-[#aeaeae] bg-white`}>
    <span className="flex-1 self-center pl-1">{children}</span>
    <div className="flex w-[14px] flex-col items-center justify-center gap-[4px] border-l border-[#c0c0c0] bg-[#f8f8f8]"><TriUp c={g ? "text-[#aaa]" : "text-[#555]"} /><Tri c="text-[#555]" /></div>
  </div>
);

const Styling = () => (
  <div className="flex w-[541px] shrink-0 flex-col">
    <div className="flex h-[20px] items-center justify-between pb-px pl-[9px] pr-[2px]"><span>Layer Styling</span><DockBtns /></div>
    <div className="pl-2 pr-[4px] pt-[2px]">
      <div className={`${btn} flex h-[25px] items-center gap-[3px] pl-[5px] pr-[6px]`}><Ico n="poly" s="size-4" /><span>ETH_zones</span><div className="ml-auto"><Tri /></div></div>
    </div>
    <div className="ml-2 flex h-[833px]">
      <div className="w-[38px] shrink-0">
        <div className="flex h-[38px] items-center justify-center pr-[2px] pt-[5px]"><Ico n="brushw" s="size-[22px]" /></div>
        <div className="flex h-[795px] flex-col items-center bg-[#5d5d5d]">
          {["abc", "abcw", "cube", "parts", "history"].map((n) => <div key={n} className="flex h-8 items-center pr-2"><Ico n={n} s="size-[22px]" /></div>)}
        </div>
      </div>
      <div className="ml-[3px] flex w-[489px] flex-col">
        <div className={`${btn} mt-[6px] flex h-[25px] shrink-0 items-center gap-[3px] pl-[7px] pr-[6px]`}><Ico n="single" s="size-[15px]" /><span>Single Symbol</span><div className="ml-auto"><Tri /></div></div>
        <div className="flex h-[142px] shrink-0">
          <div className="flex w-[125px] shrink-0 pl-[29px] pt-[41px]"><div className="h-[61px] w-[61px] border border-[#222] bg-[#fff5eb]" /></div>
          <div className="mt-[11px] h-[119px] w-[296px] shrink-0 border border-[#b4b4b4] bg-white">
            <div className="flex h-[19px] items-center bg-[#308cc6] pl-[6px]"><Tri c="text-[#123a55]" /><div className="ml-[9px] size-4 border border-[#8a9aa0] bg-[#c0d4de]" /><b className="ml-[6px] text-white">Fill</b></div>
            <div className="flex h-[19px] items-center pl-[43px]"><div className="size-4 border border-[#888] bg-[#fff5eb]" /><span className="ml-[6px]">Simple Fill</span></div>
          </div>
          <div className="ml-[5px] mt-[5px] grid h-[80px] grid-cols-2 gap-x-[6px] gap-y-1">
            <SBtn n="plusg" /><SBtn n="up" off /><SBtn n="minusg" off /><SBtn n="down" off /><SBtn n="dup" off /><SBtn n="unlock" off />
          </div>
        </div>
        <div className="h-px shrink-0 bg-[#9c9c9c]" />
        <div className="mt-[8px] flex h-[28px] shrink-0 items-center">
          <span className="w-[56px]">Color</span>
          <div className={`${btn} h-[28px] w-[412px] p-1 py-[5px]`}><div className="h-full rounded-[3px] bg-[#fff2e6]" /></div>
          <div className={`${btn} flex h-[28px] w-[11px] items-center justify-center`}><Tri /></div>
        </div>
        <div className="mt-[7px] flex h-[24px] shrink-0 items-center">
          <span className="w-[56px]">Opacity</span>
          <div className="flex w-[284px] items-center"><div className="h-[6px] flex-1 rounded-[2px] border border-[#2a75a8] bg-[#3fa0e0]" /><div className="-ml-px size-[13px] rounded-[3px] border border-[#a8a8a8] bg-[#fcfcfc]" /></div>
          <div className="ml-1"><Spin w="w-[100px]" g>100.0 %</Spin></div>
          <div className="ml-[9px]"><Ico n="dd" s="size-[22px]" /></div>
        </div>
        <div className="mt-[7px] flex h-[25px] shrink-0 items-center">
          <span className="w-[56px]">Unit</span>
          <div className={`${btn} flex h-[25px] w-[424px] items-center justify-between pl-1 pr-[6px]`}><span>Millimeters</span><Tri /></div>
        </div>
        <div className="mt-1 h-px w-[480px] shrink-0 bg-[#9c9c9c]" />
        <div className="mt-[6px] flex h-[25px] shrink-0 items-center">
          <div className="flex h-[25px] w-[450px] items-center rounded-[3px] border border-[#aeaeae] bg-white">
            <svg viewBox="0 0 14 14" className="ml-[9px] size-[14px]"><circle cx="6" cy="6" r="4.500" fill="none" stroke="#999" strokeWidth="1.300" /><path d="M9.500 9.500l4 4" stroke="#999" strokeWidth="1.600" /></svg>
            <span className="ml-[6px]">Favorites</span>
            <svg viewBox="0 0 14 11" className="ml-auto mr-[9px] h-[11px] w-[14px]"><path d="M5 0h9v11H5L0 5.500z" fill="#999" /><path d="M6.500 3l5 5M11.500 3l-5 5" stroke="#fff" strokeWidth="1.500" /></svg>
            <div className="flex h-full w-[21px] items-center justify-center rounded-r-[3px] border-l border-[#b4b4b4] bg-[#f6f6f6] pr-px"><Tri /></div>
          </div>
          <div className="ml-[10px]"><Ico n="style" s="size-4" /></div>
        </div>
        <div className="mt-1 flex h-[419px] w-[480px] shrink-0 border border-[#b4b4b4] bg-white">
          <div className="grid h-[417px] w-[464px] grid-cols-[101px_101px_101px_101px] content-start justify-start gap-0 overflow-hidden pl-[2px] pt-[19px]">
            {SYMS.map(([s, l], i) => (
              <div key={i} className="flex h-[119px] flex-col items-center text-[12.500px] leading-[15px]">
                {s}
                <div className="mt-[12px] whitespace-nowrap text-center">{l.map((t) => <div key={t}>{t}</div>)}</div>
              </div>
            ))}
          </div>
          <div className="flex w-[14px] flex-col border-l border-[#b4b4b4]">
            <div className="flex h-[14px] items-center justify-center border-b border-[#b4b4b4]"><TriUp /></div>
            <div className="h-[337px] border-b border-[#b4b4b4] bg-[#fafafa]" />
            <div className="flex-1 bg-[#e4e4e4]" />
            <div className="flex h-[14px] items-center justify-center border-t border-[#b4b4b4]"><Tri /></div>
          </div>
        </div>
        <div className="mt-[6px] flex h-[25px] w-[480px] shrink-0 items-center">
          <div className="flex h-[23px] w-6 items-center justify-center rounded-[3px] border border-[#a8a8a8] bg-[#dcdcdc]"><Ico n="grid" s="size-[15px]" /></div>
          <div className="ml-[4px] w-[16px]"><Ico n="table" s="size-[15px]" /></div>
          <div className={`${btn} ml-auto flex h-[25px] w-[106px] items-center justify-center`}>Save Symbol…</div>
          <div className={`${btn} ml-[6px] flex h-[25px] w-[85px] items-center justify-center gap-[6px]`}><span>Advanced</span><svg viewBox="0 0 6 4" className="block h-1 w-[6px]"><path d="M0 0h6L3 4z" fill="#555" /></svg></div>
        </div>
        <div className="mt-[20px] flex h-[22px] shrink-0 items-center pl-[4px]"><svg viewBox="0 0 8 10" className="h-[10px] w-2"><path d="M0 0l8 5-8 5z" fill="#333" /></svg><b className="ml-[10px]">Layer Rendering</b></div>
        <div className="mt-[3px] flex h-[25px] shrink-0 items-center">
          <div className={`${btn} flex h-[23px] w-6 items-center justify-center`}><Ico n="undoo" s="size-[14px]" /></div>
          <div className={`${btn} ml-[6px] flex h-[23px] w-6 items-center justify-center`}><Ico n="redoo" s="size-[14px]" /></div>
          <div className="ml-auto flex items-center gap-[5px]"><Check /><span>Live update</span></div>
          <div className={`${btn} ml-[13px] flex h-[25px] w-[80px] items-center justify-center`}><Ico n="check" s="size-[15px]" /><span>Apply</span></div>
        </div>
      </div>
    </div>
    <div className="ml-[5px] mt-[4px] flex items-start">
      <Tab on w="w-[110px]">Layer Styling</Tab><Tab w="w-[150px]">Processing Toolbox</Tab><Tab w="w-[93px]">Value Tool</Tab>
      <div className="h-px flex-1 bg-[#b4b4b4]" />
    </div>
  </div>
);

const Status = () => (
  <div className="flex h-[31px] items-center text-[11px]">
    <div className="ml-[4px] flex h-[25px] w-[270px] shrink-0 items-center rounded-[3px] border border-[#aeaeae] bg-white text-[13px] text-[#7c7c7c]">
      <svg viewBox="0 0 14 14" className="ml-[7px] mr-[7px] size-[14px]"><circle cx="6" cy="6" r="4.500" fill="none" stroke="#999" strokeWidth="1.300" /><path d="M9.500 9.500l4 4" stroke="#999" strokeWidth="1.600" /></svg>
      Type to locate (Ctrl+K)
    </div>
    <span className="ml-[785px] w-[64px] shrink-0">Coordinate</span>
    <div className="flex h-[23px] w-[84px] shrink-0 items-center justify-center rounded-[3px] border border-[#aeaeae] bg-white">41.24,3.13</div>
    <svg viewBox="0 0 16 16" className="ml-[4px] size-4 shrink-0"><path d="M2 3l3-1 4 6 3 6-4 1-4-5zM7 1l3 1 3 8-2 3-4-8z" fill="#333" /><path d="M4 4l5 9M8 3l3 9" stroke="#bbb" strokeWidth=".8" /><path d="M12 4l3-3M1 9l3 4" stroke="#666" /></svg>
    <span className="ml-[13px] w-[33px] shrink-0">Scale</span>
    <div className="flex h-[24px] w-[97px] shrink-0 items-center rounded-[3px] border border-[#aeaeae] bg-white">
      <span className="w-[75px] pl-[3px]">1:10079045</span>
      <div className="flex h-full flex-1 items-center justify-center border-l border-[#c0c0c0] bg-[#f8f8f8]"><Tri /></div>
    </div>
    <svg viewBox="0 0 12 16" className="ml-[12px] h-4 w-3 shrink-0"><path d="M3 8V4.500a3 3 0 0 1 6 0V8" fill="none" stroke="#888" strokeWidth="1.700" /><rect x="0" y="7.500" width="12" height="8" rx="1" fill="#5a5a5a" /></svg>
    <span className="ml-[9px] w-[55px] shrink-0">Magnifier</span>
    <Spin w="w-[98px]" h="h-[24px]">100%</Spin>
    <span className="ml-[9px] w-[56px] shrink-0">Rotation</span>
    <Spin w="w-[94px]" h="h-[24px]">0.0 °</Spin>
    <div className="ml-[6px] flex items-center gap-[5px]"><Check /><span>Render</span></div>
    <svg viewBox="0 0 16 16" className="ml-auto size-[15px] shrink-0"><circle cx="8" cy="8" r="6.500" fill="#ccc" stroke="#666" /><path d="M1 5.500h14M1 10.500h14M8 1v14M4.500 2c-2 4-2 8 0 12M11.500 2c2 4 2 8 0 12" stroke="#666" fill="none" /></svg>
    <span className="ml-[2px]">EPSG:4326</span>
    <svg viewBox="0 0 16 16" className="ml-[23px] mr-[7px] size-[16px] shrink-0"><ellipse cx="8" cy="7" rx="7.800" ry="6" fill="#5a5a5a" /><path d="M8 12l6 3.500-1-5z" fill="#5a5a5a" /><g fill="#fff"><circle cx="4.500" cy="7" r="1.200" /><circle cx="8" cy="7" r="1.200" /><circle cx="11.500" cy="7" r="1.200" /></g></svg>
  </div>
);

export default function App() {
  return (
    <div className="flex h-[1082px] w-[1922px] flex-col overflow-hidden border border-[#9a9a9a] bg-[#efefef] text-[13px] leading-[16px] text-black [font-family:'DejaVu_Sans',sans-serif]">
      <div className="grid h-[37px] shrink-0 grid-cols-[1fr_auto_1fr] items-center border-b border-[#222] bg-[#353535] text-white">
        <div />
        <span className="text-[13px] font-semibold tracking-[-0.45px] text-[#f4f4f4] [font-family:'Noto_Sans',sans-serif]">*Untitled Project — QGIS</span>
        <div className="flex items-center justify-end gap-[21px] pr-[9px]">
          <div className="mt-[6px] h-[2px] w-2 bg-white" />
          <div className="ml-[6px] size-[6px] border-2 border-white" />
          <div className="flex size-[19px] items-center justify-center rounded-full bg-[#f08437]"><svg viewBox="0 0 8 8" className="size-2"><path d="M.5.500l7 7M7.500.500l-7 7" stroke="#fff" strokeWidth="1.500" /></svg></div>
        </div>
      </div>
      <div className="flex h-[22px] shrink-0 items-center border-b border-[#cfcfcf] pl-[2px]">
        {MENU.map(([a, b, c]) => <span key={a + b + c} className="px-[7.600px]">{a}<span className="underline underline-offset-2">{b}</span>{c}</span>)}
      </div>
      <Bar items={T1} />
      <Bar items={T2} />
      <div className="flex h-[912px] shrink-0"><LeftBar /><LayersDock /><Center /><Styling /></div>
      <Status />
    </div>
  );
}
